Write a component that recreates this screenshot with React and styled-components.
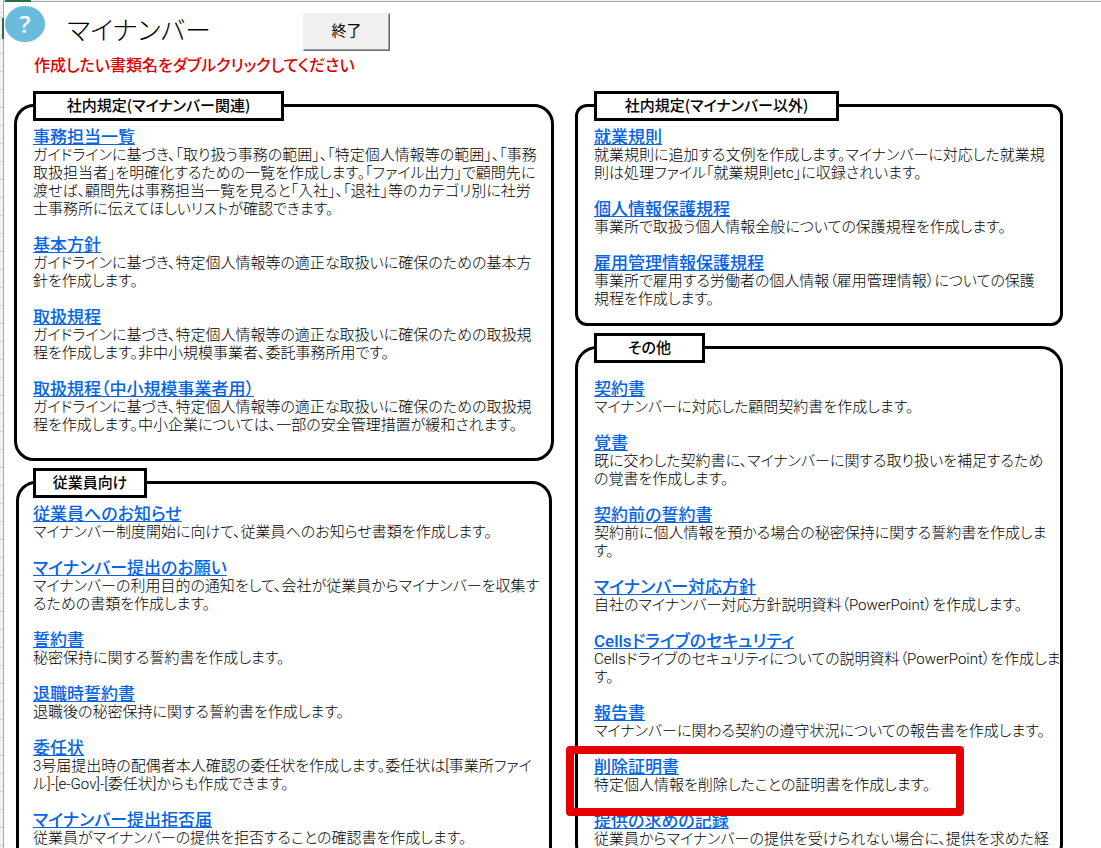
import React from 'react'
import styled, { createGlobalStyle } from 'styled-components'

const GlobalStyle = createGlobalStyle`
  * {
    box-sizing: border-box;
  }
  body {
    margin: 0;
    background: #f1f2f1;
    color: #000;
    font-family: 'Noto Sans CJK JP', sans-serif;
    font-feature-settings: 'palt';
  }
  h1, h2, h3, p {
    margin: 0;
  }
`

const internalRules = [
  {
    name: '事務担当一覧',
    text: [
      'ガイドラインに基づき、「取り扱う事務の範囲」、「特定個人情報等の範囲」、「事務',
      '取扱担当者」を明確化するための一覧を作成します。「ファイル出力」で顧問先に',
      '渡せば、顧問先は事務担当一覧を見ると「入社」、「退社」等のカテゴリ別に社労',
      '士事務所に伝えてほしいリストが確認できます。',
    ],
  },
  {
    name: '基本方針',
    text: [
      'ガイドラインに基づき、特定個人情報等の適正な取扱いに確保のための基本方',
      '針を作成します。',
    ],
  },
  {
    name: '取扱規程',
    text: [
      'ガイドラインに基づき、特定個人情報等の適正な取扱いに確保のための取扱規',
      '程を作成します。非中小規模事業者、委託事務所用です。',
    ],
  },
  {
    name: '取扱規程（中小規模事業者用）',
    text: [
      'ガイドラインに基づき、特定個人情報等の適正な取扱いに確保のための取扱規',
      '程を作成します。中小企業については、一部の安全管理措置が緩和されます。',
    ],
  },
]

const forEmployees = [
  {
    name: '従業員へのお知らせ',
    text: ['マイナンバー制度開始に向けて、従業員へのお知らせ書類を作成します。'],
  },
  {
    name: 'マイナンバー提出のお願い',
    text: [
      'マイナンバーの利用目的の通知をして、会社が従業員からマイナンバーを収集す',
      'るための書類を作成します。',
    ],
  },
  { name: '誓約書', text: ['秘密保持に関する誓約書を作成します。'] },
  {
    name: '退職時誓約書',
    text: ['退職後の秘密保持に関する誓約書を作成します。'],
  },
  {
    name: '委任状',
    text: [
      '3号届提出時の配偶者本人確認の委任状を作成します。委任状は[事業所ファイ',
      'ル]-[e-Gov]-[委任状]からも作成できます。',
    ],
  },
  {
    name: 'マイナンバー提出拒否届',
    text: ['従業員がマイナンバーの提供を拒否することの確認書を作成します。'],
  },
]

const otherRules = [
  {
    name: '就業規則',
    text: [
      '就業規則に追加する文例を作成します。マイナンバーに対応した就業規',
      '則は処理ファイル「就業規則etc」に収録されいます。',
    ],
  },
  {
    name: '個人情報保護規程',
    text: ['事業所で取扱う個人情報全般についての保護規程を作成します。'],
  },
  {
    name: '雇用管理情報保護規程',
    text: [
      '事業所で雇用する労働者の個人情報（雇用管理情報）についての保護',
      '規程を作成します。',
    ],
  },
]

const others = [
  {
    name: '契約書',
    text: ['マイナンバーに対応した顧問契約書を作成します。'],
  },
  {
    name: '覚書',
    text: [
      '既に交わした契約書に、マイナンバーに関する取り扱いを補足するため',
      'の覚書を作成します。',
    ],
  },
  {
    name: '契約前の誓約書',
    text: [
      '契約前に個人情報を預かる場合の秘密保持に関する誓約書を作成しま',
      'す。',
    ],
  },
  {
    name: 'マイナンバー対応方針',
    text: ['自社のマイナンバー対応方針説明資料（PowerPoint）を作成します。'],
  },
  {
    name: 'Cellsドライブのセキュリティ',
    text: [
      'Cellsドライブのセキュリティについての説明資料（PowerPoint）を作成しま',
      'す。',
    ],
  },
  {
    name: '報告書',
    text: ['マイナンバーに関わる契約の遵守状況についての報告書を作成します。'],
  },
  {
    name: '削除証明書',
    text: ['特定個人情報を削除したことの証明書を作成します。'],
    marked: true,
  },
  {
    name: '提供の求めの記録',
    text: ['従業員からマイナンバーの提供を受けられない場合に、提供を求めた経'],
  },
]

const Group = ({ title, titleWidth, items, ...rest }) => (
  <Panel {...rest}>
    <PanelTitle $width={titleWidth}>{title}</PanelTitle>
    <List $spaced={rest.$spaced}>
      {items.map((item) => (
        <Item key={item.name}>
          <DocLink href='#'>{item.name}</DocLink>
          <Description>{item.text.join('\n')}</Description>
          {item.marked && <Marker />}
        </Item>
      ))}
    </List>
  </Panel>
)

const App = () => {
  return (
    <>
      <GlobalStyle />
      <Window>
        <Gutter />
        <Sheet>
          <ColumnMark />
          <RowMark />
          <Header>
            <Help type='button' aria-label='ヘルプ'>
              ?
            </Help>
            <Title>マイナンバー</Title>
            <CloseButton type='button'>終了</CloseButton>
          </Header>
          <Notice>作成したい書類名をダブルクリックしてください</Notice>
          <Columns>
            <Column>
              <Group
                title='社内規定(マイナンバー関連)'
                items={internalRules}
                titleWidth={251}
                $radius={20}
                $bottom={24}
              />
              <Group
                title='従業員向け'
                items={forEmployees}
                titleWidth={114}
                $radius={20}
                $bottom={24}
                $inset
              />
            </Column>
            <Column>
              <Group
                title='社内規定(マイナンバー以外)'
                items={otherRules}
                titleWidth={245}
                $radius={12}
                $bottom={15}
              />
              <Group
                title='その他'
                items={others}
                titleWidth={111}
                $radius={22}
                $bottom={15}
                $spaced
              />
            </Column>
          </Columns>
        </Sheet>
      </Window>
    </>
  )
}

const Window = styled.div`
  display: flex;
  height: 100vh;
  overflow: hidden;
`
const Gutter = styled.div`
  width: 4px;
  flex: none;
  border-right: 1px solid #a6a6a6;
  background: repeating-linear-gradient(#f1f2f1 0 17px, #d0d0d0 17px 18px);
`
const Sheet = styled.main`
  flex: 1;
  min-width: 0;
  margin-top: 1px;
  background: #fff;
  border-top: 1px solid #a6a6a6;
`
const ColumnMark = styled.div`
  position: absolute;
  top: 0;
  left: 5px;
  width: 26px;
  height: 2px;
  background: #217346;
`
const RowMark = styled.div`
  position: absolute;
  top: 18px;
  left: 2px;
  width: 2px;
  height: 21px;
  background: #217346;
`
const Header = styled.header`
  display: flex;
  height: 50px;
`
const Help = styled.button`
  width: 40px;
  height: 36px;
  margin: 4px 0 0 1px;
  padding: 0;
  border: 0;
  border-radius: 50%;
  background: #6bbcdc;
  color: #fff;
  font: 600 24px/36px 'Open Sans', sans-serif;
`
const Title = styled.h1`
  width: 236px;
  margin-left: 22px;
  font-size: 26px;
  font-weight: 300;
  line-height: 54px;
`
const CloseButton = styled.button`
  width: 87px;
  height: 38px;
  margin-top: 11px;
  padding: 0 0 4px;
  border: 1px solid;
  border-color: #f0f0f0 #696969 #696969 #f0f0f0;
  box-shadow: inset -1px -1px #a0a0a0;
  background: #f0f0f0;
  color: #000;
  font: 400 15px/32px 'Noto Sans CJK JP', sans-serif;
`
const Notice = styled.p`
  margin-left: 30px;
  color: #e00000;
  font-size: 16px;
  font-weight: 500;
  line-height: 24px;
`
const Columns = styled.div`
  display: grid;
  grid-template-columns: 540fr 488fr;
  gap: 21px;
  padding: 14px 38px 0 10px;
`
const Column = styled.div`
  min-width: 0;
`
const Panel = styled.section`
  margin: 14px ${({ $inset }) => ($inset ? '2px' : '0')} 0;
  padding: 0 0 ${({ $bottom }) => $bottom}px
    ${({ $inset }) => ($inset ? '14px' : '16px')};
  border: 3px solid #000;
  border-radius: ${({ $radius }) => $radius}px;
  & + & {
    margin-top: 20px;
  }
`
const PanelTitle = styled.h2`
  width: ${({ $width }) => $width}px;
  height: 30px;
  margin-top: -16px;
  border: 3px solid #000;
  background: #fff;
  font-size: 15px;
  font-weight: 500;
  line-height: 22px;
  text-align: center;
`
const List = styled.ul`
  display: grid;
  gap: 18px;
  margin: 0;
  padding: ${({ $spaced }) => ($spaced ? '17px' : '7px')} 0 0;
  font-family: Roboto, 'Noto Sans CJK JP', sans-serif;
  list-style: none;
`
const Item = styled.li`
  position: relative;
`
const DocLink = styled.a`
  display: block;
  width: max-content;
  color: #0563e5;
  font-size: 17px;
  font-weight: 500;
  line-height: 18px;
`
const Description = styled.p`
  font-size: 15px;
  font-weight: 300;
  line-height: 18px;
  white-space: pre;
`
const Marker = styled.div`
  position: absolute;
  top: -12px;
  left: -28px;
  width: 398px;
  height: 70px;
  border: 8px solid #e60000;
  border-radius: 4px;
  z-index: 1;
`
export default App
